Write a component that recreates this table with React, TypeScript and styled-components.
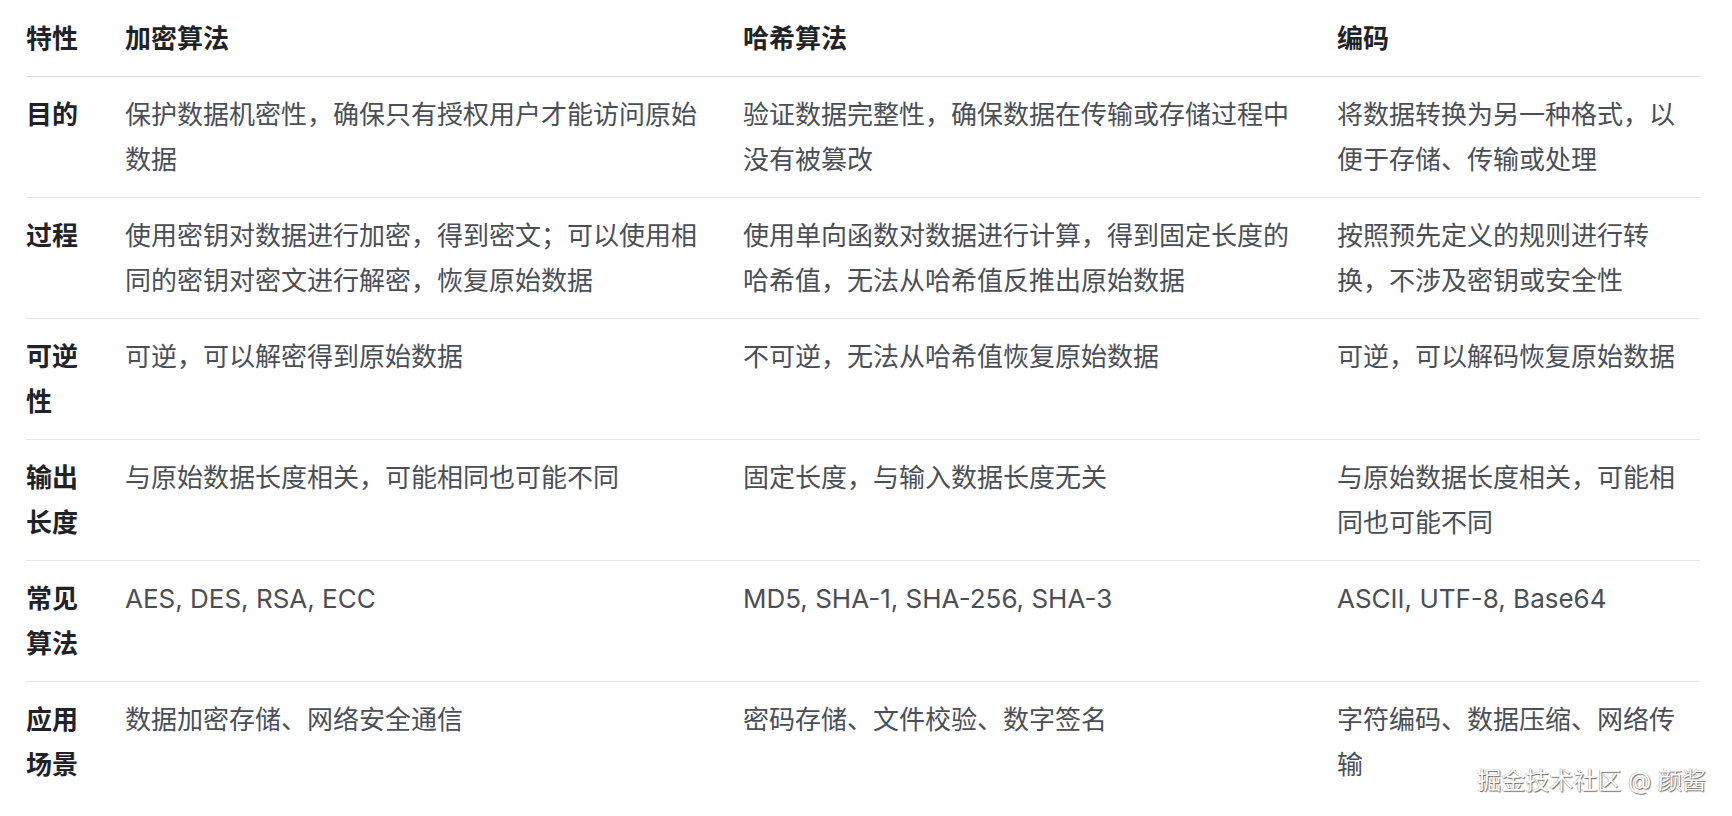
import React from 'react'
import styled, { createGlobalStyle } from 'styled-components'

const GlobalStyle = createGlobalStyle`
  html, body {
    margin: 0;
    padding: 0;
    background: #fff;
  }
  body {
    font-family: Inter, "Noto Sans CJK SC", sans-serif;
  }
`

const Page = styled.div`
  position: relative;
  width: 1732px;
  height: 816px;
  overflow: hidden;
  background: #fff;
  padding-left: 26px;
  box-sizing: border-box;
`

const Table = styled.table`
  border-collapse: collapse;
  table-layout: fixed;
  width: 1674px;
  font-size: 26px;
  line-height: 45px;
`

const HeadCell = styled.th`
  text-align: left;
  font-weight: 700;
  color: #1f2328;
  padding: 16px 12px 15px;
  border-bottom: 1px solid #d9dbdf;
  &:first-child {
    padding-left: 0;
  }
  &:last-child {
    padding-right: 0;
  }
`

const Row = styled.tr<{ $last?: boolean }>`
  border-bottom: ${(p) => (p.$last ? 'none' : '1px solid #e3e5e8')};
`

const Cell = styled.td<{ $label?: boolean }>`
  vertical-align: top;
  padding: 15px 12px;
  color: ${(p) => (p.$label ? '#1f2328' : '#4a4f57')};
  font-weight: ${(p) => (p.$label ? 700 : 400)};
  word-break: break-all;
  &:first-child {
    padding-left: 0;
  }
  &:last-child {
    padding-right: 0;
  }
`

const Watermark = styled.div`
  position: absolute;
  right: 26px;
  bottom: 20px;
  font-size: 24px;
  line-height: 30px;
  color: #fff;
  text-shadow: 1px 1px 1px #6b6b6b, -0.5px -0.5px 0.5px #9a9a9a;
  white-space: pre;
`

const widths = [87, 618, 594, 375]

const head = ['特性', '加密算法', '哈希算法', '编码']

const rows: string[][] = [
  [
    '目的',
    '保护数据机密性，确保只有授权用户才能访问原始数据',
    '验证数据完整性，确保数据在传输或存储过程中没有被篡改',
    '将数据转换为另一种格式，以便于存储、传输或处理',
  ],
  [
    '过程',
    '使用密钥对数据进行加密，得到密文；可以使用相同的密钥对密文进行解密，恢复原始数据',
    '使用单向函数对数据进行计算，得到固定长度的哈希值，无法从哈希值反推出原始数据',
    '按照预先定义的规则进行转换，不涉及密钥或安全性',
  ],
  ['可逆性', '可逆，可以解密得到原始数据', '不可逆，无法从哈希值恢复原始数据', '可逆，可以解码恢复原始数据'],
  [
    '输出长度',
    '与原始数据长度相关，可能相同也可能不同',
    '固定长度，与输入数据长度无关',
    '与原始数据长度相关，可能相同也可能不同',
  ],
  ['常见算法', 'AES, DES, RSA, ECC', 'MD5, SHA-1, SHA-256, SHA-3', 'ASCII, UTF-8, Base64'],
  ['应用场景', '数据加密存储、网络安全通信', '密码存储、文件校验、数字签名', '字符编码、数据压缩、网络传输'],
]

function App() {
  return (
    <Page>
      <GlobalStyle />
      <Table>
        <colgroup>
          {widths.map((w) => (
            <col key={w} style={{ width: w }} />
          ))}
        </colgroup>
        <thead>
          <tr>
            {head.map((h) => (
              <HeadCell key={h}>{h}</HeadCell>
            ))}
          </tr>
        </thead>
        <tbody>
          {rows.map((r, i) => (
            <Row key={r[0]} $last={i === rows.length - 1}>
              {r.map((c, j) => (
                <Cell key={j} $label={j === 0}>
                  {c}
                </Cell>
              ))}
            </Row>
          ))}
        </tbody>
      </Table>
      <Watermark>掘金技术社区 @ 颜酱</Watermark>
    </Page>
  )
}

export default App
